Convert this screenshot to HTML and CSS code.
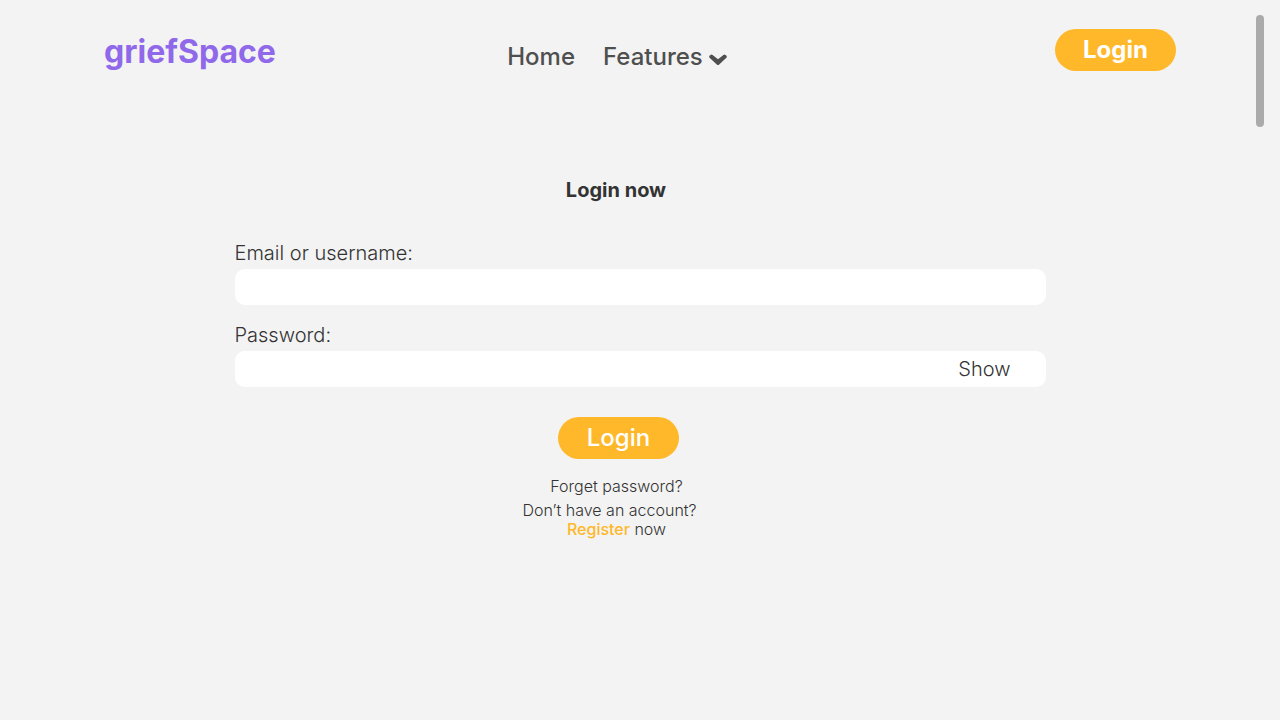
FILE: index.html
```html
<!DOCTYPE html>
<html lang="en">
<head>
<meta charset="utf-8">
<meta name="viewport" content="width=device-width, initial-scale=1">
<title>griefSpace – Login</title>
<link rel="stylesheet" href="styles.css">
</head>
<body>
<header class="header">
  <a class="brand" href="#">griefSpace</a>
  <nav class="nav">
    <a class="nav-link" href="#">Home</a>
    <button class="nav-link nav-menu" type="button">Features
      <svg class="chevron" width="18" height="12" viewBox="0 0 18 12" aria-hidden="true"><path d="M.6 3.700Q-.3 2.500.8 1.500L1.500.9Q2.500.1 3.600 1L9 5.200L14.400 1Q15.500.1 16.500.9L17.200 1.500Q18.300 2.500 17.400 3.700L10.200 10.400Q9 11.500 7.800 10.400Z" fill="#4f4f4f"/></svg>
    </button>
  </nav>
  <button class="pill pill-bold" type="button">Login</button>
</header>
<main class="main">
  <form class="form">
    <h1 class="title">Login now</h1>
    <div class="field">
      <label class="label" for="user">Email or username:</label>
      <input class="input" id="user" type="text">
    </div>
    <div class="field">
      <label class="label" for="password">Password:</label>
      <div class="input-row">
        <input class="input" id="password" type="password">
        <button class="show" type="button">Show</button>
      </div>
    </div>
    <div class="actions">
      <button class="pill submit" type="submit">Login</button>
      <a class="forgot" href="#">Forget password?</a>
      <p class="signup"><span class="question">Don’t have an account?</span><span><a class="register" href="#">Register</a> now</span></p>
    </div>
  </form>
</main>
<div class="scroll-thumb"></div>
</body>
</html>
```

FILE: styles.css
```css
* {
  box-sizing: border-box;
}

body {
  margin: 0;
  position: relative;
  min-height: 100vh;
  background: #f3f3f3;
  color: #333;
  font-family: Inter, sans-serif;
}

a {
  color: inherit;
  text-decoration: none;
}

button,
input {
  margin: 0;
  padding: 0;
  border: 0;
  background: none;
  color: inherit;
  font-family: inherit;
}

button {
  cursor: pointer;
}

.header {
  display: grid;
  grid-template-columns: 1fr auto 1fr;
  align-items: start;
  padding: 29px 104px 0;
}

.brand {
  padding-top: 2px;
  color: #9068ea;
  font-size: 32px;
  font-weight: 700;
  line-height: 42px;
}

.nav {
  display: flex;
  gap: 28px;
  padding: 13px 46px 0 0;
}

.nav-link {
  color: #4f4f4f;
  font-size: 24px;
  font-weight: 500;
  line-height: 30px;
}

.nav-menu {
  display: flex;
  align-items: center;
  gap: 6px;
}

.chevron {
  margin-top: 6px;
}

.pill {
  justify-self: end;
  width: 121px;
  height: 42px;
  padding-bottom: 2px;
  border-radius: 21px;
  background: #ffb829;
  color: #fff;
  font-size: 24px;
  font-weight: 500;
}

.pill-bold {
  font-weight: 700;
}

.main {
  padding: 105px 24px 40px;
}

.form {
  max-width: 811px;
  margin: 0 auto;
}

.title {
  margin: 0 0 39px;
  padding-right: 48px;
  font-size: 20px;
  font-weight: 700;
  line-height: 24px;
  text-align: center;
}

.field {
  margin-bottom: 18px;
}

.label {
  display: block;
  margin-bottom: 4px;
  font-size: 20px;
  font-weight: 300;
  line-height: 24px;
}

.input {
  display: block;
  width: 100%;
  height: 36px;
  padding: 0 12px;
  border-radius: 10px;
  background: #fff;
  font-size: 20px;
  font-weight: 300;
}

.input-row {
  display: flex;
  align-items: center;
  padding-right: 35px;
  border-radius: 10px;
  background: #fff;
}

.show {
  font-size: 20px;
  font-weight: 300;
  line-height: 24px;
}

.actions {
  display: flex;
  flex-direction: column;
  align-items: center;
  padding: 12px 47px 0 0;
  font-size: 16px;
  font-weight: 300;
  line-height: 19px;
}

.submit {
  margin-left: 4px;
}

.forgot {
  margin-top: 18px;
}

.signup {
  display: flex;
  flex-direction: column;
  align-items: center;
  margin: 5px 0 0;
}

.question {
  padding-right: 14px;
}

.register {
  color: #ffb829;
  font-weight: 500;
}

.scroll-thumb {
  position: absolute;
  top: 15px;
  right: 16px;
  width: 8px;
  height: 112px;
  border-radius: 4px;
  background: #aaa;
}
```
